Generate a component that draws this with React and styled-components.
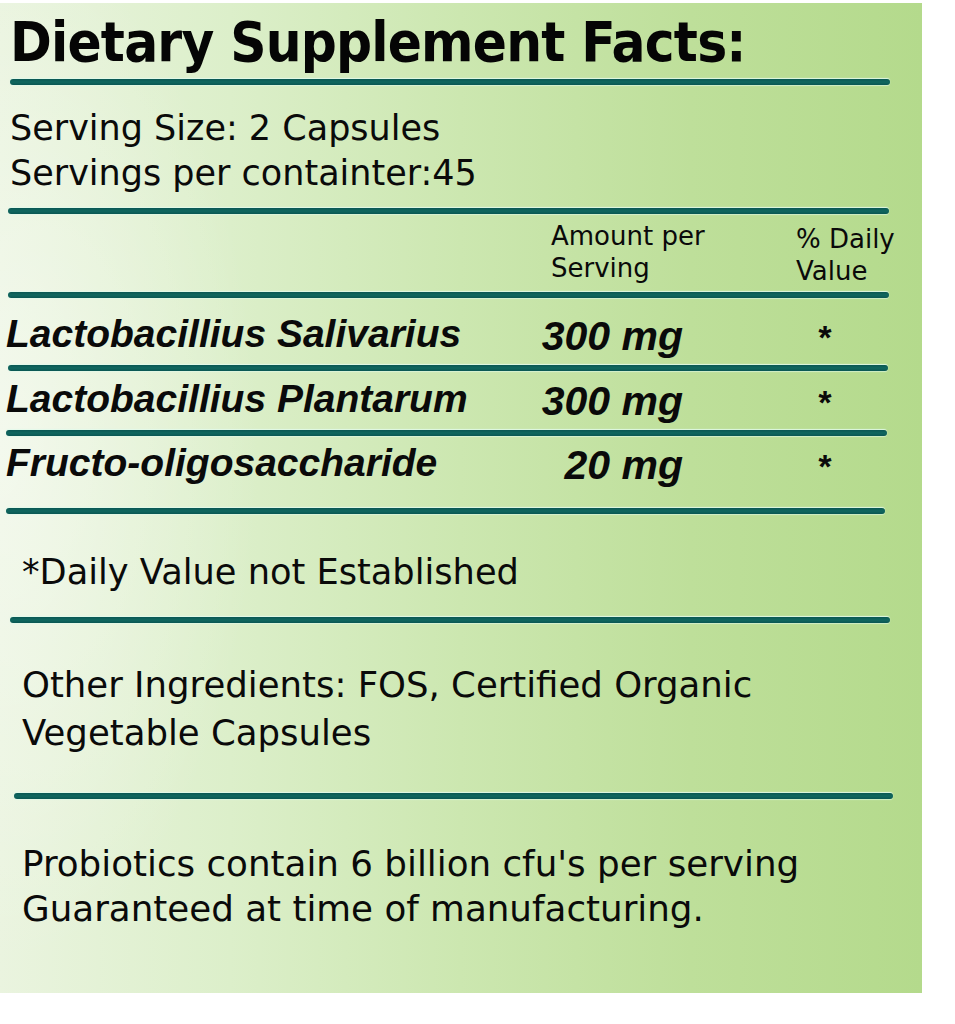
import styled, { createGlobalStyle } from 'styled-components';

const GlobalStyle = createGlobalStyle`
  html, body {
    margin: 0;
    padding: 0;
    background: #ffffff;
  }
  body {
    font-family: "DejaVu Sans", Verdana, sans-serif;
    color: #0a0a0a;
  }
`;

const ingredients = [
  { name: 'Lactobacillius Salivarius', amount: '300 mg', pad: 16, height: 67, rule: [8, 888] },
  { name: 'Lactobacillius Plantarum', amount: '300 mg', pad: 8, height: 59, rule: [6, 887] },
  { name: 'Fructo-oligosaccharide', amount: '20 mg', pad: 7, height: 72, rule: [6, 885] },
];

const App = () => {
  return (
    <>
      <GlobalStyle />
      <Panel>
        <Title>Dietary Supplement Facts:</Title>
        <Rule $from={10} $to={890} />

        <ServingBlock>
          <div>Serving Size: 2 Capsules</div>
          <div>Servings per containter:45</div>
        </ServingBlock>
        <Rule $from={8} $to={889} />

        <HeaderRow>
          <HeaderCell $pad={6}>
            Amount per
            <br />
            Serving
          </HeaderCell>
          <HeaderCell $pad={9}>
            % Daily
            <br />
            Value
          </HeaderCell>
        </HeaderRow>
        <Rule $from={8} $to={889} />

        {ingredients.map((item) => (
          <div key={item.name}>
            <IngredientRow $pad={item.pad} $height={item.height}>
              <Name>{item.name}</Name>
              <Amount>{item.amount}</Amount>
              <Star>*</Star>
            </IngredientRow>
            <Rule $from={item.rule[0]} $to={item.rule[1]} />
          </div>
        ))}

        <TextBlock $pad={35} $height={103} $lh={45} $size={35.2}>
          *Daily Value not Established
        </TextBlock>
        <Rule $from={10} $to={890} />

        <TextBlock $pad={38} $height={170} $lh={48} $size={35.5}>
          <div>Other Ingredients: FOS, Certified Organic</div>
          <div>Vegetable Capsules</div>
        </TextBlock>
        <Rule $from={14} $to={893} />

        <TextBlock $pad={42} $height={194} $lh={45} $size={35.7}>
          <div>Probiotics contain 6 billion cfu's per serving</div>
          <div>Guaranteed at time of manufacturing.</div>
        </TextBlock>
      </Panel>
    </>
  );
};

// Styled Components
const Panel = styled.div`
  width: 922px;
  margin-top: 3px;
  display: flex;
  flex-direction: column;
  background:
    radial-gradient(ellipse 260px 520px at 0% 45%, rgba(255, 255, 255, 0.45), rgba(255, 255, 255, 0) 100%),
    linear-gradient(90deg, #eaf4df 0%, #dcefca 25%, #cce7b0 50%, #bedf9a 75%, #b4da8c 100%);
`;

const Title = styled.h1`
  margin: 0;
  height: 76px;
  box-sizing: border-box;
  padding: 11px 0 0 10px;
  font-family: "DejaVu Sans Condensed", "DejaVu Sans", sans-serif;
  font-stretch: condensed;
  font-size: 56px;
  line-height: 1;
  font-weight: 700;
  letter-spacing: -0.8px;
  color: #050505;
  white-space: nowrap;
`;

const Rule = styled.div`
  flex: none;
  height: 6px;
  margin-left: ${(p) => p.$from}px;
  width: ${(p) => p.$to - p.$from}px;
  border-radius: 3px;
  background: linear-gradient(180deg, #0a5753 0%, #10675f 50%, #0a5753 100%);
  box-shadow: 0 -1px 1px rgba(225, 250, 235, 0.9), 0 1px 1px rgba(225, 250, 235, 0.6);
`;

const ServingBlock = styled.div`
  height: 123px;
  box-sizing: border-box;
  padding: 21px 0 0 10px;
  font-size: 35px;
  line-height: 45px;
  white-space: nowrap;
`;

const HeaderRow = styled.div`
  height: 78px;
  display: grid;
  grid-template-columns: 245px 1fr;
  padding-left: 551px;
  box-sizing: border-box;
`;

const HeaderCell = styled.div`
  padding-top: ${(p) => p.$pad}px;
  font-size: 26px;
  line-height: 32px;
  white-space: nowrap;
`;

const IngredientRow = styled.div`
  height: ${(p) => p.$height}px;
  box-sizing: border-box;
  padding: ${(p) => p.$pad}px 0 0 6px;
  display: grid;
  grid-template-columns: 520px 157px 1fr;
  align-items: start;
  font-family: "Liberation Sans", Arial, sans-serif;
  font-style: italic;
  font-weight: 700;
  white-space: nowrap;
`;

const Name = styled.div`
  font-size: 39px;
  line-height: 1;
`;

const Amount = styled.div`
  font-size: 41px;
  line-height: 1;
  margin-top: 2px;
  text-align: right;
`;

const Star = styled.div`
  font-size: 34px;
  line-height: 1;
  padding-left: 134px;
  margin-top: 6px;
`;

const TextBlock = styled.div`
  height: ${(p) => p.$height}px;
  box-sizing: border-box;
  padding: ${(p) => p.$pad}px 0 0 22px;
  font-size: ${(p) => p.$size}px;
  line-height: ${(p) => p.$lh}px;
  white-space: nowrap;
`;

export default App;
